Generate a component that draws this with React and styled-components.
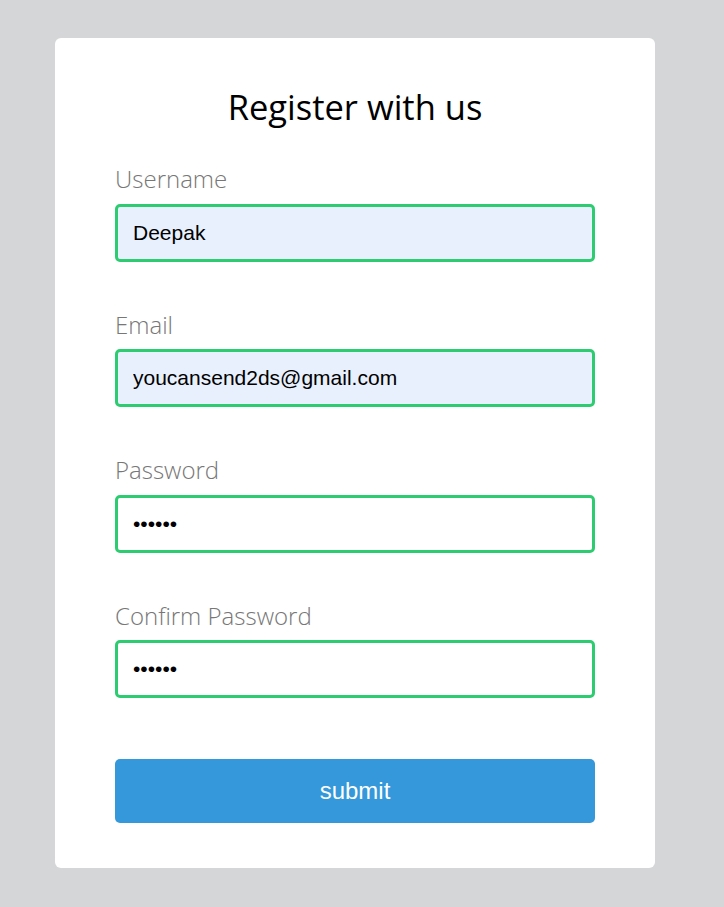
import React from 'react'
import styled, { createGlobalStyle } from 'styled-components'

const GlobalStyle = createGlobalStyle`
  * {
    box-sizing: border-box;
  }

  body {
    margin: 0;
    background-color: #d5d6d8;
    font-family: "Open Sans", "Liberation Sans", sans-serif;
  }
`;

const fields = [
  { id: 'username', label: 'Username', type: 'text', value: 'Deepak', filled: true },
  { id: 'email', label: 'Email', type: 'text', value: 'youcansend2ds@gmail.com', filled: true },
  { id: 'password', label: 'Password', type: 'password', value: 'secret' },
  { id: 'password2', label: 'Confirm Password', type: 'password', value: 'secret' },
];

const App = () => {
  return (
    <Page>
      <GlobalStyle />
      <Container>
        <Form onSubmit={(e) => e.preventDefault()}>
          <Title>Register with us</Title>
          {fields.map((f) => (
            <FormControl key={f.id}>
              <Label htmlFor={f.id}>{f.label}</Label>
              <Input
                id={f.id}
                type={f.type}
                defaultValue={f.value}
                $filled={f.filled}
              />
            </FormControl>
          ))}
          <Submit type="submit">submit</Submit>
        </Form>
      </Container>
    </Page>
  )
};

const Page = styled.div`
  display: flex;
  align-items: flex-start;
  justify-content: center;
  min-height: 100vh;
  padding: 38px 14px 0 0;
`;

const Container = styled.div`
  background-color: #fff;
  border-radius: 6px;
  width: 600px;
`;

const Form = styled.form`
  padding: 45px 60px;
`;

const Title = styled.h2`
  text-align: center;
  margin: 0 0 32px;
  font-size: 34.5px;
  line-height: 47px;
  font-weight: 400;
  color: #000;
`;

const FormControl = styled.div`
  margin-bottom: 15px;
  padding-bottom: 31px;
`;

const Label = styled.label`
  display: block;
  color: #777;
  font-size: 24px;
  line-height: 33px;
  font-weight: 300;
  margin-bottom: 8.5px;
`;

const Input = styled.input`
  display: block;
  width: 100%;
  height: 58px;
  border: 3px solid #2ecc71;
  border-radius: 5px;
  padding: 0 15px;
  font-family: "Liberation Sans", Arial, sans-serif;
  font-size: 21px;
  color: #000;
  background-color: ${(p) => (p.$filled ? '#e8f0fe' : '#fff')};
  outline: none;
`;

const Submit = styled.button`
  display: block;
  width: 100%;
  height: 64px;
  margin-top: 30px;
  border: none;
  border-radius: 5px;
  background-color: #3498db;
  color: #fff;
  font-family: "Liberation Sans", Arial, sans-serif;
  font-size: 24px;
  cursor: pointer;
`;

export default App;
